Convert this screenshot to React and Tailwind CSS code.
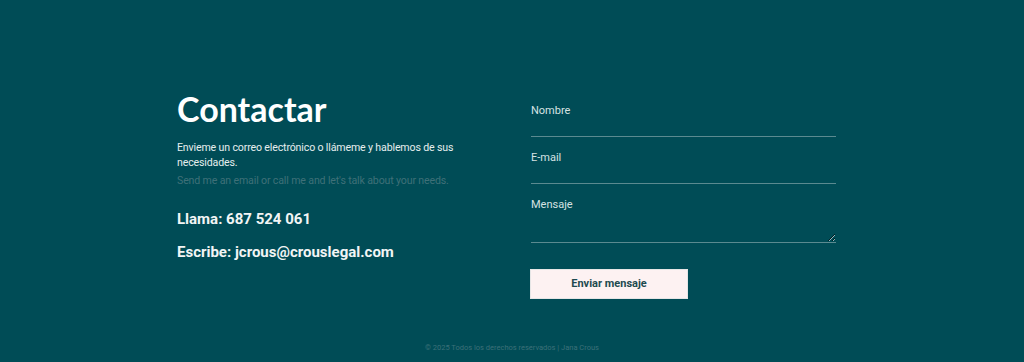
export default function App() {
  return (
    <div className="min-h-[362px] w-full bg-[#004c56] flex flex-col font-['Roboto',sans-serif]">
      <div className="w-[670px] mx-auto flex gap-[54px] pt-[87px]">
        {/* Left: intro */}
        <div className="w-[300px]">
          <h1 className="font-['Lato',sans-serif] font-bold text-[34px] leading-[44px] text-white">
            Contactar
          </h1>
          <p className="mt-[9px] text-[10.6px] tracking-[-0.15px] leading-[15px] text-[#e6eeee]">
            Envieme un correo electrónico o llámeme y hablemos de sus necesidades.
          </p>
          <p className="mt-[3px] text-[10.6px] tracking-[-0.15px] leading-[15px] text-[#3f7078]">
            Send me an email or call me and let's talk about your needs.
          </p>
          <p className="mt-[21px] text-[15px] font-bold text-[#f2f5f5] leading-[20px]">
            Llama: 687 524 061
          </p>
          <p className="mt-[13px] text-[15px] font-bold text-[#f2f5f5] leading-[20px]">
            Escribe: jcrous@crouslegal.com
          </p>
        </div>

        {/* Right: form */}
        <form className="w-[305px] pt-[17px]" onSubmit={(e) => e.preventDefault()}>
          <label className="block">
            <span className="block text-[11px] leading-[14px] text-[#d6e2e2]">Nombre</span>
            <input
              type="text"
              className="block w-full h-[17px] mt-[2px] bg-transparent border-0 border-b border-[#5b8a90] outline-none text-white text-[12px]"
            />
          </label>
          <label className="block mt-[14px]">
            <span className="block text-[11px] leading-[14px] text-[#d6e2e2]">E-mail</span>
            <input
              type="email"
              className="block w-full h-[17px] mt-[2px] bg-transparent border-0 border-b border-[#5b8a90] outline-none text-white text-[12px]"
            />
          </label>
          <label className="block mt-[14px]">
            <span className="block text-[11px] leading-[14px] text-[#d6e2e2]">Mensaje</span>
            <textarea
              className="block w-full h-[29px] mt-[2px] bg-transparent border-0 border-b border-[#5b8a90] outline-none text-white text-[12px] resize-y"
            />
          </label>
          <button
            type="submit"
            className="mt-[26px] -ml-px w-[158px] h-[30px] bg-[#fdf2f2] border border-[#e6e6e6] text-[#1d4a4f] text-[11px] font-bold"
          >
            Enviar mensaje
          </button>
        </form>
      </div>

      <footer className="mt-auto pb-[9px] text-center text-[7.5px] text-[#3c7078]">
        © 2025 Todos los derechos reservados | Jana Crous
      </footer>
    </div>
  );
}
